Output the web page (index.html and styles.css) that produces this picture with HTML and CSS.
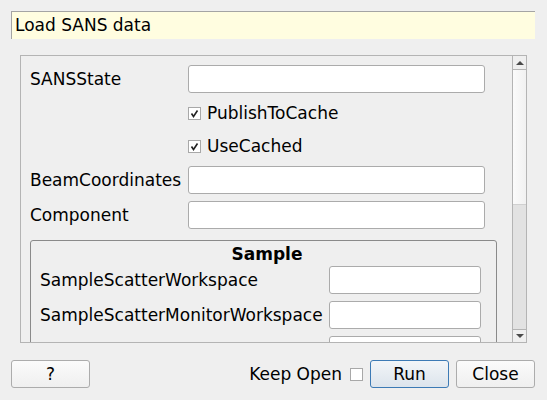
FILE: index.html
```html
<!DOCTYPE html>
<html>
<head>
<meta charset="utf-8">
<link rel="stylesheet" href="styles.css">
</head>
<body>
<div class="title">Load SANS data</div>
<div class="scrollarea">
  <div class="viewport">
    <div class="form">
      <div class="lbl">SANSState</div><div class="input"></div>
      <div></div><div class="check"><span class="box"><svg viewBox="0 0 13 13" width="13" height="13"><path d="M3.5 6.5 L5.5 9.5 L9.5 3.5" fill="none" stroke="#222" stroke-width="1.6"/></svg></span>PublishToCache</div>
      <div></div><div class="check"><span class="box"><svg viewBox="0 0 13 13" width="13" height="13"><path d="M3.5 6.5 L5.5 9.5 L9.5 3.5" fill="none" stroke="#222" stroke-width="1.6"/></svg></span>UseCached</div>
      <div class="lbl">BeamCoordinates</div><div class="input"></div>
      <div class="lbl">Component</div><div class="input"></div>
    </div>
    <div class="group">
      <div class="gtitle">Sample</div>
      <div class="gform">
        <div class="lbl">SampleScatterWorkspace</div><div class="input"></div>
        <div class="lbl">SampleScatterMonitorWorkspace</div><div class="input"></div>
        <div class="lbl">SampleTransmissionWorkspace</div><div class="input"></div>
      </div>
    </div>
  </div>
  <div class="scrollbar">
    <div class="sb-up"><span class="tri-up"></span></div>
    <div class="sb-thumb"></div>
    <div class="sb-track"></div>
    <div class="sb-down"><span class="tri-down"></span></div>
  </div>
</div>
<div class="buttons">
  <div class="btn help">?</div>
  <div class="spacer"></div>
  <div class="keep">Keep Open</div>
  <span class="box empty"></span>
  <div class="btn run">Run</div>
  <div class="btn close">Close</div>
</div>
</body>
</html>
```

FILE: styles.css
```css
* { box-sizing: border-box; }
body {
  margin: 0;
  background: #efefef;
  font-family: "DejaVu Sans", sans-serif;
  font-size: 17px;
  color: #000;
  width: 547px;
  height: 400px;
  overflow: hidden;
}
.title {
  margin: 11px 0 0 11px;
  width: 524px;
  height: 28px;
  background: #fffde0;
  border-top: 1px solid #a4a4a4;
  border-left: 1px solid #a4a4a4;
  padding-left: 3px;
  line-height: 26px;
}
.scrollarea {
  margin: 16px 0 0 20px;
  width: 507px;
  height: 288px;
  border: 1px solid #b4b4b4;
  display: flex;
  overflow: hidden;
}
.viewport {
  flex: 1;
  overflow: hidden;
  padding: 9px 0 0 9px;
}
.form {
  display: grid;
  grid-template-columns: 158px 297px;
  grid-auto-rows: auto;
  row-gap: 7px;
}
.lbl {
  height: 28px;
  line-height: 28px;
  white-space: nowrap;
}
.input {
  height: 28px;
  background: #fff;
  border: 1px solid #ababab;
  border-radius: 3px;
}
.check {
  height: 26px;
  display: flex;
  align-items: center;
  white-space: nowrap;
}
.box {
  display: inline-block;
  width: 13px;
  height: 13px;
  background: #fff;
  border: 1px solid #a8a8a8;
  margin-right: 6px;
  position: relative;
  flex: none;
}
.box svg {
  position: absolute;
  left: -1px;
  top: -1px;
}
.group {
  margin-top: 11px;
  width: 467px;
  border: 1px solid #8a8a8a;
  border-radius: 3px;
  padding: 3px 0 0 9px;
  height: 200px;
}
.gtitle {
  font-weight: bold;
  text-align: center;
  height: 20px;
  line-height: 20px;
  padding-right: 2px;
}
.gform {
  margin-top: 2px;
  display: grid;
  grid-template-columns: 289px 152px;
  row-gap: 7px;
}
.scrollbar {
  width: 14px;
  border-left: 1px solid #b4b4b4;
  display: flex;
  flex-direction: column;
}
.sb-up {
  height: 14px;
  border-bottom: 1px solid #b4b4b4;
  display: flex;
  align-items: center;
  justify-content: center;
  background: #efefef;
}
.sb-thumb {
  height: 135px;
  background: linear-gradient(to right, #fbfbfb, #f1f1f1);
  border-bottom: 1px solid #d0d0d0;
}
.sb-track {
  flex: 1;
  background: #e2e2e2;
}
.sb-down {
  height: 13px;
  border-top: 1px solid #b4b4b4;
  display: flex;
  align-items: center;
  justify-content: center;
  background: #efefef;
}
.tri-up {
  width: 0; height: 0;
  border-left: 4px solid transparent;
  border-right: 4px solid transparent;
  border-bottom: 4px solid #4a4a4a;
}
.tri-down {
  width: 0; height: 0;
  border-left: 4px solid transparent;
  border-right: 4px solid transparent;
  border-top: 4px solid #4a4a4a;
}
.buttons {
  margin: 17px 0 0 11px;
  width: 524px;
  height: 28px;
  display: flex;
  align-items: center;
}
.spacer { flex: 1; }
.btn {
  width: 79px;
  height: 28px;
  border: 1px solid #acacac;
  border-radius: 3px;
  background: linear-gradient(#fbfbfb, #efefef);
  text-align: center;
  line-height: 26px;
}
.keep {
  margin-right: 8px;
}
.buttons .box.empty {
  margin-right: 7px;
}
.run {
  border-color: #3c7ab5;
  background: linear-gradient(#f2f5f8, #dce4ec);
  margin-right: 7px;
}
```
